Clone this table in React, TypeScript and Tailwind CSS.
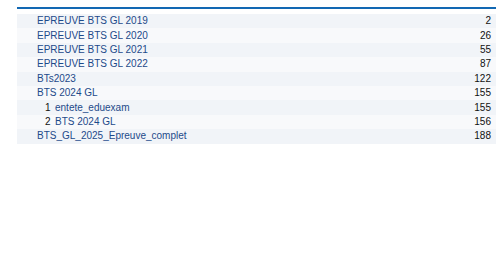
import React from "react";

type Row = { label: string; value: number; sub?: string };

const rows: Row[] = [
  { label: "EPREUVE BTS GL 2019", value: 2 },
  { label: "EPREUVE BTS GL 2020", value: 26 },
  { label: "EPREUVE BTS GL 2021", value: 55 },
  { label: "EPREUVE BTS GL 2022", value: 87 },
  { label: "BTs2023", value: 122 },
  { label: "BTS 2024 GL", value: 155 },
  { label: "entete_eduexam", value: 155, sub: "1" },
  { label: "BTS 2024 GL", value: 156, sub: "2" },
  { label: "BTS_GL_2025_Epreuve_complet", value: 188 },
];

export default function App() {
  return (
    <div
      className="w-[497px] h-[257px] bg-white pl-[17px] pr-[1px] pt-[7px]"
      style={{ fontFamily: '"Liberation Sans", Arial, sans-serif' }}
    >
      <div className="border-t-2 border-[#1268b3] pt-[5px]">
        {rows.map((r, i) => (
          <div
            key={i}
            className={`flex items-center h-[14.4px] text-[10px] leading-none pr-[5px] ${
              i % 2 === 0 ? "bg-[#f1f4f8]" : "bg-[#f8f9fb]"
            }`}
          >
            {r.sub ? (
              <div className="flex items-center pl-[28px] flex-1">
                <span className="text-[#111] w-[10px]">{r.sub}</span>
                <span className="text-[#1d4a8a]">{r.label}</span>
              </div>
            ) : (
              <span className="pl-[20px] flex-1 text-[#1d4a8a]">{r.label}</span>
            )}
            <span className="text-[#111] text-right">{r.value}</span>
          </div>
        ))}
      </div>
    </div>
  );
}
